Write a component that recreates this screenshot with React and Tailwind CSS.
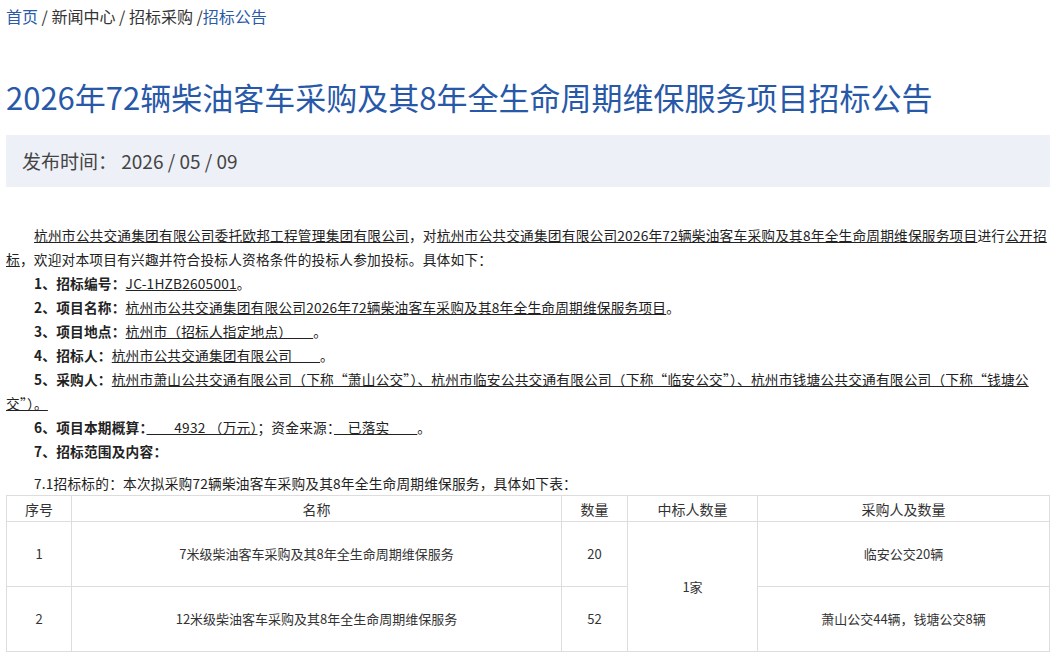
import React from "react";

const font = { fontFamily: '"Noto Sans CJK SC", "Noto Sans", sans-serif' };

const Row = ({ label, children }) => (
  <p className="pl-[28px]">
    <span className="font-bold">{label}</span>
    {children}
  </p>
);

export default function App() {
  return (
    <div className="bg-white w-[1056px] h-[659px] overflow-hidden text-[#333]" style={font}>
      <div className="px-[6px] pt-[3px] text-[16px] leading-[26px]">
        <span className="text-[#2a5aa8]">首页</span> / 新闻中心 / 招标采购 /<span className="text-[#2a5aa8]">招标公告</span>
      </div>
      <h1 className="px-[6px] mt-[48px] text-[31px] leading-[40px] text-[#2858a8]">
        2026年72辆柴油客车采购及其8年全生命周期维保服务项目招标公告
      </h1>
      <div className="mx-[6px] mt-[18px] h-[52px] bg-[#edf0f7] flex items-center px-[16px] text-[19px] text-[#444]">
        发布时间： 2026 / 05 / 09
      </div>
      <div className="mx-[6px] mt-[36px] text-[13.7px] tracking-[0.2px] leading-[24px] text-[#222]">
        <p className="indent-[28px]">
          <u>杭州市公共交通集团有限公司委托欧邦工程管理集团有限公司</u>，对<u>杭州市公共交通集团有限公司2026年72辆柴油客车采购及其8年全生命周期维保服务项目</u>进行<u>公开招标</u>，欢迎对本项目有兴趣并符合投标人资格条件的投标人参加投标。具体如下：
        </p>
        <Row label="1、招标编号："><u>JC-1HZB2605001</u>。</Row>
        <Row label="2、项目名称："><u>杭州市公共交通集团有限公司2026年72辆柴油客车采购及其8年全生命周期维保服务项目</u>。</Row>
        <Row label="3、项目地点："><u>杭州市（招标人指定地点）　　</u>。</Row>
        <Row label="4、招标人："><u>杭州市公共交通集团有限公司　　</u>。</Row>
        <p className="indent-[28px]">
          <span className="font-bold">5、采购人：</span>
          <u>杭州市萧山公共交通有限公司（下称“萧山公交”）、杭州市临安公共交通有限公司（下称“临安公交”）、杭州市钱塘公共交通有限公司（下称“钱塘公交”）。</u>
        </p>
        <Row label="6、项目本期概算："><u>　　4932 （万元）</u>；资金来源：<u>　已落实　　</u>。</Row>
        <Row label="7、招标范围及内容："></Row>
        <p className="pl-[28px] mt-[8px]">7.1招标标的：本次拟采购72辆柴油客车采购及其8年全生命周期维保服务，具体如下表：</p>
        <table className="w-full border-collapse text-[13px] text-[#333] tracking-normal">
          <colgroup>
            <col className="w-[65px]" />
            <col className="w-[490px]" />
            <col className="w-[66px]" />
            <col className="w-[130px]" />
            <col />
          </colgroup>
          <thead>
            <tr className="h-[26px] text-[14px]">
              {["序号", "名称", "数量", "中标人数量", "采购人及数量"].map((h) => (
                <td key={h} className="border border-[#ddd] text-center font-normal">{h}</td>
              ))}
            </tr>
          </thead>
          <tbody>
            <tr className="h-[65px]">
              <td className="border border-[#ddd] text-center">1</td>
              <td className="border border-[#ddd] text-center">7米级柴油客车采购及其8年全生命周期维保服务</td>
              <td className="border border-[#ddd] text-center">20</td>
              <td rowSpan={2} className="border border-[#ddd] text-center">1家</td>
              <td className="border border-[#ddd] text-center">临安公交20辆</td>
            </tr>
            <tr className="h-[65px]">
              <td className="border border-[#ddd] text-center">2</td>
              <td className="border border-[#ddd] text-center">12米级柴油客车采购及其8年全生命周期维保服务</td>
              <td className="border border-[#ddd] text-center">52</td>
              <td className="border border-[#ddd] text-center">萧山公交44辆，钱塘公交8辆</td>
            </tr>
          </tbody>
        </table>
      </div>
    </div>
  );
}
